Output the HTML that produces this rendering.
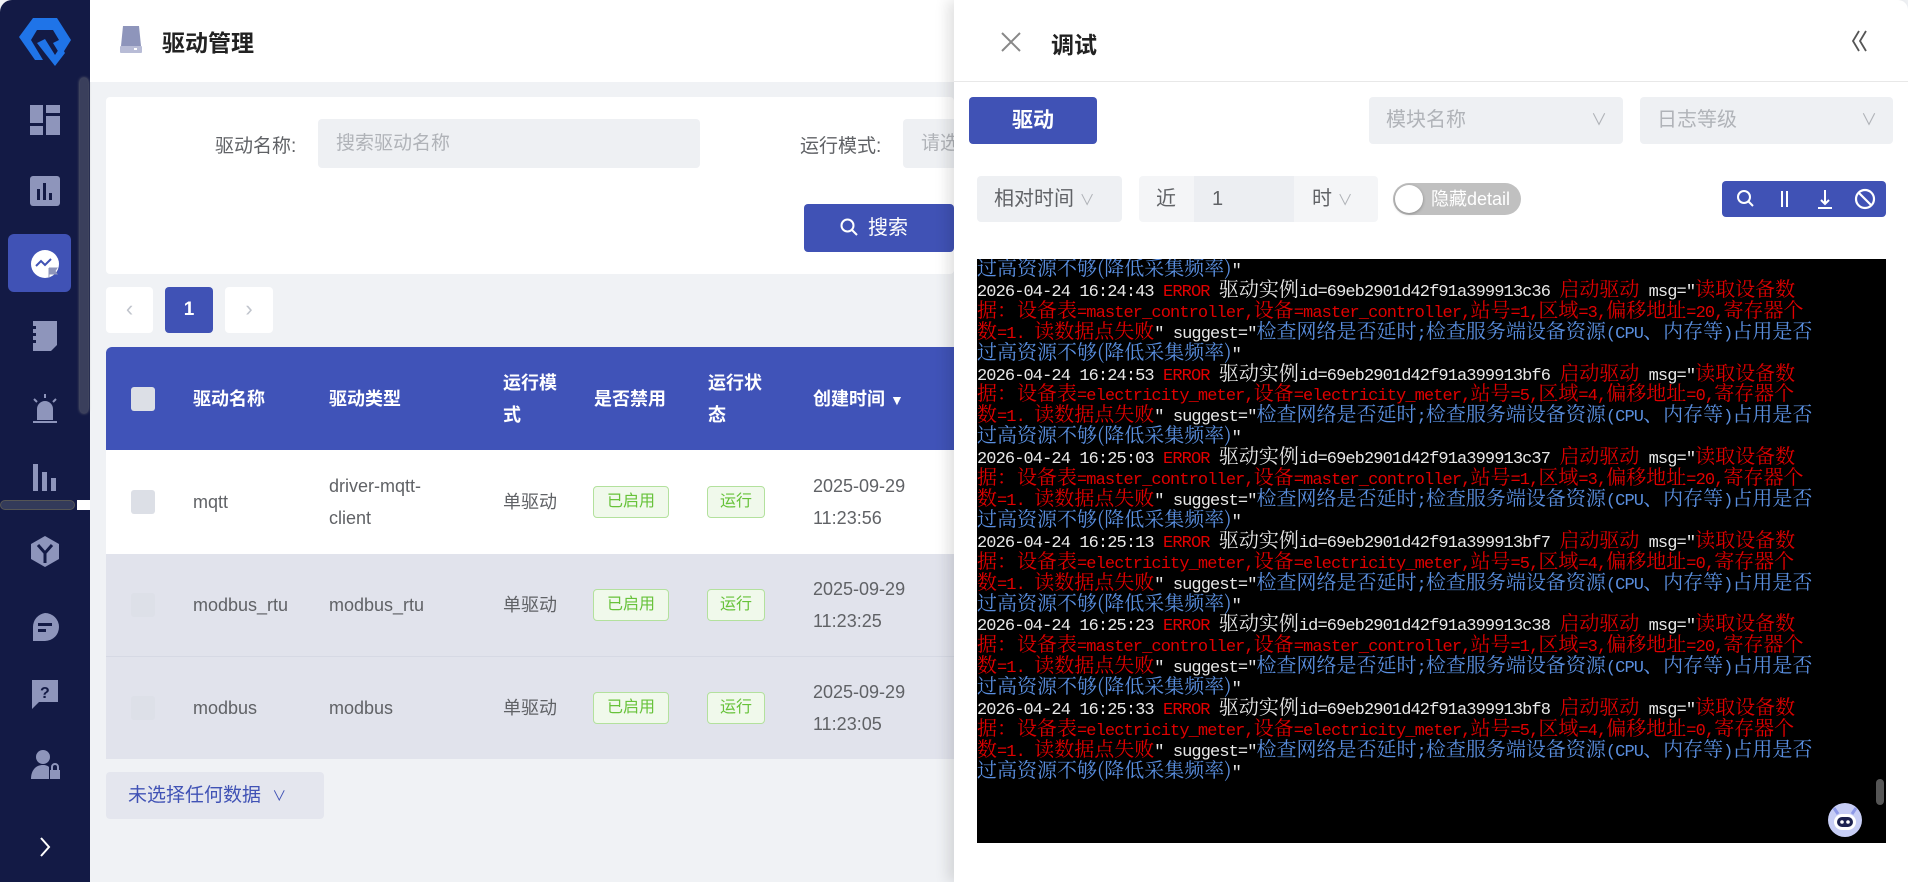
<!DOCTYPE html>
<html><head><meta charset="utf-8"><style>
*{box-sizing:border-box;margin:0;padding:0}
body{width:1908px;height:882px;overflow:hidden;background:#f0f2f5;font-family:"Liberation Sans","Noto Sans CJK SC",sans-serif;position:relative}
.a{position:absolute}
.side{left:0;top:0;width:90px;height:882px;background:#131a45;border-top-left-radius:12px}
.ic{position:absolute;left:29px;width:32px;height:32px}
.main-h{left:90px;top:0;width:864px;height:82px;background:#fff}
.th{color:#fff;font-size:18px;font-weight:bold;line-height:32px}
.td{color:#606266;font-size:18px;line-height:32px}
.tag{position:absolute;border:1px solid #b3e19d;background:#f0f9eb;color:#67c23a;font-size:16px;border-radius:4px;height:32px;line-height:30px;text-align:center}
.cb{position:absolute;left:131px;width:24px;height:24px;background:#dcdfe6;border-radius:3px}
.log{left:977px;top:259px;width:909px;height:584px;background:#000;overflow:hidden;font-family:"Liberation Mono","Noto Serif CJK SC",monospace;font-size:17px;letter-spacing:-0.9px;line-height:20.9px;color:#e8e8e8;white-space:pre;padding-top:3px}
.log i{font-style:normal;font-size:20px;letter-spacing:0;line-height:0;vertical-align:baseline;font-family:"Noto Serif CJK SC","Noto Sans CJK SC",serif}
.r{color:#e00000}.b{color:#5a8fe0}
.sel{position:absolute;background:#eef0f3;border-radius:4px;color:#b0b3b8;font-size:20px}
</style></head><body>
<div class="a side">
  <svg class="a" style="left:15px;top:15px" width="60" height="52" viewBox="0 0 60 52"><path d="M18 3h24l14 22-10 16-8-13 6-3-6-10H22l-6 10 12 20h-8L4 22z" fill="#1f74e8"/><path d="M22 28l8-4 10 16 6-9 4 7-10 13z" fill="#1f74e8"/></svg>
  <div class="a" style="left:80px;top:78px;width:8px;height:335px;border-radius:4px;background:#3a3f5c;box-shadow:0 0 3px #888"></div>
  <div class="a" style="left:0;top:500px;width:75px;height:10px;border-radius:5px;background:#333a5a;border:1px solid #555"></div>
  <div class="a" style="left:77px;top:500px;width:13px;height:10px;background:#fff"></div>
  <svg class="ic" style="top:104px" viewBox="0 0 32 32" fill="#8e95bb"><rect x="1" y="1" width="13" height="18"/><rect x="17" y="1" width="14" height="8"/><rect x="17" y="12" width="14" height="19"/><rect x="1" y="22" width="13" height="9"/></svg>
  <svg class="ic" style="top:175px" viewBox="0 0 32 32"><rect x="1" y="1" width="30" height="30" rx="3" fill="#8e95bb"/><rect x="8" y="14" width="3" height="11" fill="#131a45"/><rect x="14" y="8" width="3" height="17" fill="#131a45"/><rect x="20" y="18" width="3" height="7" fill="#131a45"/></svg>
  <div class="a" style="left:8px;top:234px;width:63px;height:58px;border-radius:6px;background:#4052b5"></div>
  <svg class="ic" style="top:248px" viewBox="0 0 32 32"><circle cx="16" cy="16" r="14" fill="#fff"/><path d="M7 18l5-5 4 4 6-6" stroke="#4052b5" stroke-width="2" fill="none"/><path d="M20 20v10M20 20h8l-2 3 2 3h-8" fill="#8e95bb" stroke="#8e95bb"/></svg>
  <svg class="ic" style="top:320px" viewBox="0 0 32 32" fill="#8e95bb"><path d="M4 1h24v24l-6 6H4z"/><rect x="1" y="6" width="6" height="3" fill="#131a45"/><rect x="1" y="13" width="6" height="3" fill="#131a45"/><rect x="1" y="20" width="6" height="3" fill="#131a45"/></svg>
  <svg class="ic" style="top:392px" viewBox="0 0 32 32" fill="#8e95bb"><path d="M8 28V17a8 8 0 0116 0v11z"/><rect x="4" y="29" width="24" height="2"/><path d="M16 2v4M5 7l3 3M27 7l-3 3" stroke="#8e95bb" stroke-width="2"/></svg>
  <svg class="ic" style="top:460px" viewBox="0 0 32 32" fill="#8e95bb"><rect x="4" y="4" width="5" height="27"/><rect x="13" y="12" width="5" height="19"/><rect x="22" y="18" width="5" height="13"/></svg>
  <svg class="ic" style="top:535px" viewBox="0 0 32 32"><path d="M16 1l14 8v15l-14 8-14-8V9z" fill="#8e95bb"/><path d="M9 10l7 8 7-8M16 18v10" stroke="#131a45" stroke-width="3" fill="none"/></svg>
  <svg class="ic" style="top:611px" viewBox="0 0 32 32"><path d="M16 2a14 14 0 110 28H4V16A14 14 0 0116 2z" fill="#8e95bb"/><rect x="9" y="12" width="14" height="3" fill="#131a45"/><rect x="9" y="18" width="8" height="3" fill="#131a45"/></svg>
  <svg class="ic" style="top:678px" viewBox="0 0 32 32"><path d="M3 2h26v22H10l-7 7z" fill="#8e95bb"/><text x="11" y="20" font-size="16" font-weight="bold" fill="#131a45" font-family="Liberation Sans">?</text></svg>
  <svg class="ic" style="top:748px" viewBox="0 0 32 32" fill="#8e95bb"><circle cx="14" cy="9" r="7"/><path d="M2 31c0-9 5-14 12-14 3 0 5 1 6 2v12z"/><rect x="21" y="22" width="10" height="9"/><path d="M23 22v-3a3 3 0 016 0v3" stroke="#8e95bb" stroke-width="2" fill="none"/></svg>
  <svg class="a" style="left:38px;top:836px" width="14" height="22" viewBox="0 0 14 22"><path d="M3 2l8 9-8 9" stroke="#fff" stroke-width="2" fill="none"/></svg>
</div>
<div class="a main-h"></div>
<svg class="a" style="left:119px;top:26px" width="24" height="28" viewBox="0 0 24 28"><path d="M4 0h16l2 20H2z" fill="#8e95bb"/><rect x="1" y="20" width="22" height="7" rx="1" fill="#b8bcd6"/><rect x="15" y="22" width="3" height="2" fill="#fff"/></svg>
<div class="a" style="left:162px;top:24px;font-size:23px;font-weight:bold;color:#222">驱动管理</div>
<div class="a" style="left:106px;top:97px;width:848px;height:177px;background:#fff;border-radius:4px"></div>
<div class="a" style="left:215px;top:131px;font-size:19px;color:#606266">驱动名称:</div>
<div class="a" style="left:318px;top:119px;width:382px;height:49px;background:#eef0f3;border-radius:4px;color:#b0b3b8;font-size:19px;line-height:49px;padding-left:18px">搜索驱动名称</div>
<div class="a" style="left:800px;top:131px;font-size:19px;color:#606266">运行模式:</div>
<div class="a" style="left:903px;top:119px;width:51px;height:49px;background:#eef0f3;border-radius:4px 0 0 4px;color:#b0b3b8;font-size:19px;line-height:49px;padding-left:18px;overflow:hidden;white-space:nowrap">请选</div>
<div class="a" style="left:804px;top:204px;width:150px;height:48px;background:#4052b5;border-radius:4px;color:#fff;font-size:20px;line-height:48px;padding-left:36px"><svg width="18" height="18" viewBox="0 0 18 18" style="vertical-align:-2px;margin-right:10px"><circle cx="7.5" cy="7.5" r="6" stroke="#fff" stroke-width="2" fill="none"/><path d="M12 12l5 5" stroke="#fff" stroke-width="2"/></svg>搜索</div>
<div class="a" style="left:106px;top:287px;width:47px;height:46px;background:#fff;border-radius:4px;color:#c0c4cc;text-align:center;line-height:44px;font-size:22px">‹</div>
<div class="a" style="left:165px;top:287px;width:48px;height:46px;background:#4052b5;border-radius:4px;color:#fff;text-align:center;line-height:46px;font-size:19px;font-weight:bold">1</div>
<div class="a" style="left:225px;top:287px;width:48px;height:46px;background:#fff;border-radius:4px;color:#c0c4cc;text-align:center;line-height:44px;font-size:22px">›</div>
<div class="a" style="left:106px;top:347px;width:848px;height:103px;background:#4053b8;border-radius:6px 0 0 0"></div>
<div class="cb" style="top:387px"></div>
<div class="a th" style="left:193px;top:383px">驱动名称</div>
<div class="a th" style="left:329px;top:383px">驱动类型</div>
<div class="a th" style="left:503px;top:367px">运行模<br>式</div>
<div class="a th" style="left:594px;top:383px">是否禁用</div>
<div class="a th" style="left:708px;top:367px">运行状<br>态</div>
<div class="a th" style="left:813px;top:383px">创建时间 <span style="font-size:14px">▼</span></div>
<div class="a" style="left:106px;top:450px;width:848px;height:104px;background:#fff"></div>
<div class="a" style="left:106px;top:554px;width:848px;height:103px;background:#e1e3ec;border-bottom:1px solid #d6d9e4"></div>
<div class="a" style="left:106px;top:657px;width:848px;height:102px;background:#e1e3ec"></div>
<div class="cb" style="top:490px"></div>
<div class="a td" style="left:193px;top:486px">mqtt</div>
<div class="a td" style="left:329px;top:470px">driver-mqtt-<br>client</div>
<div class="a td" style="left:503px;top:486px">单驱动</div>
<div class="tag" style="left:593px;top:486px;width:76px">已启用</div>
<div class="tag" style="left:707px;top:486px;width:58px">运行</div>
<div class="a td" style="left:813px;top:470px">2025-09-29<br>11:23:56</div>
<div class="cb" style="top:593px;background:#dde0e8"></div>
<div class="a td" style="left:193px;top:589px">modbus_rtu</div>
<div class="a td" style="left:329px;top:589px">modbus_rtu</div>
<div class="a td" style="left:503px;top:589px">单驱动</div>
<div class="tag" style="left:593px;top:589px;width:76px">已启用</div>
<div class="tag" style="left:707px;top:589px;width:58px">运行</div>
<div class="a td" style="left:813px;top:573px">2025-09-29<br>11:23:25</div>
<div class="cb" style="top:696px;background:#dde0e8"></div>
<div class="a td" style="left:193px;top:692px">modbus</div>
<div class="a td" style="left:329px;top:692px">modbus</div>
<div class="a td" style="left:503px;top:692px">单驱动</div>
<div class="tag" style="left:593px;top:692px;width:76px">已启用</div>
<div class="tag" style="left:707px;top:692px;width:58px">运行</div>
<div class="a td" style="left:813px;top:676px">2025-09-29<br>11:23:05</div>
<div class="a" style="left:106px;top:772px;width:218px;height:47px;background:#e4e6ee;border-radius:4px;color:#4052b5;font-size:19px;line-height:47px;padding-left:22px">未选择任何数据 <span style="font-size:14px;color:#4052b5;margin-left:6px">∨</span></div>
<div class="a" style="left:954px;top:0;width:954px;height:882px;background:#fff;box-shadow:-6px 0 14px rgba(0,0,0,0.12);border-top-right-radius:10px"></div>
<div class="a" style="left:954px;top:81px;width:954px;height:1px;background:#e8e8e8"></div>
<svg class="a" style="left:1001px;top:32px" width="20" height="20" viewBox="0 0 20 20"><path d="M1 1l18 18M19 1L1 19" stroke="#888" stroke-width="2"/></svg>
<div class="a" style="left:1051px;top:26px;font-size:23px;font-weight:bold;color:#222">调试</div>
<svg class="a" style="left:1850px;top:30px" width="18" height="22" viewBox="0 0 18 22"><path d="M9 1L3 11l6 10M16 1l-6 10 6 10" stroke="#555" stroke-width="1.8" fill="none"/></svg>
<div class="a" style="left:969px;top:97px;width:128px;height:47px;background:#4052b5;border-radius:4px;color:#fff;font-size:21px;line-height:47px;text-align:center;font-weight:bold">驱动</div>
<div class="sel" style="left:1369px;top:97px;width:254px;height:47px;line-height:47px;padding-left:17px">模块名称<span class="a" style="right:16px;top:0;font-size:16px">∨</span></div>
<div class="sel" style="left:1640px;top:97px;width:253px;height:47px;line-height:47px;padding-left:17px">日志等级<span class="a" style="right:16px;top:0;font-size:16px">∨</span></div>
<div class="sel" style="left:977px;top:176px;width:145px;height:46px;line-height:46px;padding-left:17px;color:#606266">相对时间 <span style="font-size:15px;color:#b0b3b8">∨</span></div>
<div class="sel" style="left:1139px;top:176px;width:239px;height:46px;line-height:46px;background:#f4f5f7;color:#606266;padding-left:17px">近</div>
<div class="a" style="left:1194px;top:176px;width:100px;height:46px;background:#eceef2;color:#606266;font-size:20px;line-height:46px;padding-left:18px">1</div>
<div class="a" style="left:1312px;top:176px;color:#606266;font-size:20px;line-height:46px">时 <span style="font-size:15px;color:#b0b3b8">∨</span></div>
<div class="a" style="left:1393px;top:183px;width:128px;height:32px;background:#c0c0c0;border-radius:16px;color:#fff;font-size:18px;line-height:32px;padding-left:38px">隐藏detail</div>
<div class="a" style="left:1395px;top:185px;width:28px;height:28px;background:#fff;border-radius:50%;box-shadow:0 1px 3px rgba(0,0,0,.3)"></div>
<div class="a" style="left:1722px;top:181px;width:164px;height:36px;background:#4052b5;border-radius:4px"></div>
<svg class="a" style="left:1722px;top:181px" width="164" height="36" viewBox="0 0 164 36"><circle cx="22" cy="16" r="6" stroke="#fff" stroke-width="2" fill="none"/><path d="M26 20l5 5" stroke="#fff" stroke-width="2"/><path d="M60 10v16M65 10v16" stroke="#fff" stroke-width="2"/><path d="M103 9v14M99 19l4 4 4-4M96 27h14" stroke="#fff" stroke-width="2" fill="none"/><circle cx="143" cy="18" r="9" stroke="#fff" stroke-width="2.2" fill="none"/><path d="M137 12l12 12" stroke="#fff" stroke-width="2.2"/></svg>
<div class="a log"><span class="b"><i>过高资源不够(降低采集频率)</i></span>"
2026-04-24 16:24:43 <span class="r">ERROR</span> <i>驱动实例</i>id=69eb2901d42f91a399913c36 <span class="r"><i>启动驱动</i></span> msg="<span class="r"><i>读取设备数</i></span>
<span class="r"><i>据：设备表</i>=master_controller,<i>设备</i>=master_controller,<i>站号</i>=1,<i>区域</i>=3,<i>偏移地址</i>=20,<i>寄存器个</i></span>
<span class="r"><i>数</i>=1. <i>读数据点失败</i></span>" suggest="<span class="b"><i>检查网络是否延时</i>;<i>检查服务端设备资源</i>(CPU<i>、内存等</i>)<i>占用是否</i></span>
<span class="b"><i>过高资源不够(降低采集频率)</i></span>"
2026-04-24 16:24:53 <span class="r">ERROR</span> <i>驱动实例</i>id=69eb2901d42f91a399913bf6 <span class="r"><i>启动驱动</i></span> msg="<span class="r"><i>读取设备数</i></span>
<span class="r"><i>据：设备表</i>=electricity_meter,<i>设备</i>=electricity_meter,<i>站号</i>=5,<i>区域</i>=4,<i>偏移地址</i>=0,<i>寄存器个</i></span>
<span class="r"><i>数</i>=1. <i>读数据点失败</i></span>" suggest="<span class="b"><i>检查网络是否延时</i>;<i>检查服务端设备资源</i>(CPU<i>、内存等</i>)<i>占用是否</i></span>
<span class="b"><i>过高资源不够(降低采集频率)</i></span>"
2026-04-24 16:25:03 <span class="r">ERROR</span> <i>驱动实例</i>id=69eb2901d42f91a399913c37 <span class="r"><i>启动驱动</i></span> msg="<span class="r"><i>读取设备数</i></span>
<span class="r"><i>据：设备表</i>=master_controller,<i>设备</i>=master_controller,<i>站号</i>=1,<i>区域</i>=3,<i>偏移地址</i>=20,<i>寄存器个</i></span>
<span class="r"><i>数</i>=1. <i>读数据点失败</i></span>" suggest="<span class="b"><i>检查网络是否延时</i>;<i>检查服务端设备资源</i>(CPU<i>、内存等</i>)<i>占用是否</i></span>
<span class="b"><i>过高资源不够(降低采集频率)</i></span>"
2026-04-24 16:25:13 <span class="r">ERROR</span> <i>驱动实例</i>id=69eb2901d42f91a399913bf7 <span class="r"><i>启动驱动</i></span> msg="<span class="r"><i>读取设备数</i></span>
<span class="r"><i>据：设备表</i>=electricity_meter,<i>设备</i>=electricity_meter,<i>站号</i>=5,<i>区域</i>=4,<i>偏移地址</i>=0,<i>寄存器个</i></span>
<span class="r"><i>数</i>=1. <i>读数据点失败</i></span>" suggest="<span class="b"><i>检查网络是否延时</i>;<i>检查服务端设备资源</i>(CPU<i>、内存等</i>)<i>占用是否</i></span>
<span class="b"><i>过高资源不够(降低采集频率)</i></span>"
2026-04-24 16:25:23 <span class="r">ERROR</span> <i>驱动实例</i>id=69eb2901d42f91a399913c38 <span class="r"><i>启动驱动</i></span> msg="<span class="r"><i>读取设备数</i></span>
<span class="r"><i>据：设备表</i>=master_controller,<i>设备</i>=master_controller,<i>站号</i>=1,<i>区域</i>=3,<i>偏移地址</i>=20,<i>寄存器个</i></span>
<span class="r"><i>数</i>=1. <i>读数据点失败</i></span>" suggest="<span class="b"><i>检查网络是否延时</i>;<i>检查服务端设备资源</i>(CPU<i>、内存等</i>)<i>占用是否</i></span>
<span class="b"><i>过高资源不够(降低采集频率)</i></span>"
2026-04-24 16:25:33 <span class="r">ERROR</span> <i>驱动实例</i>id=69eb2901d42f91a399913bf8 <span class="r"><i>启动驱动</i></span> msg="<span class="r"><i>读取设备数</i></span>
<span class="r"><i>据：设备表</i>=electricity_meter,<i>设备</i>=electricity_meter,<i>站号</i>=5,<i>区域</i>=4,<i>偏移地址</i>=0,<i>寄存器个</i></span>
<span class="r"><i>数</i>=1. <i>读数据点失败</i></span>" suggest="<span class="b"><i>检查网络是否延时</i>;<i>检查服务端设备资源</i>(CPU<i>、内存等</i>)<i>占用是否</i></span>
<span class="b"><i>过高资源不够(降低采集频率)</i></span>"</div>
<div class="a" style="left:1876px;top:779px;width:8px;height:26px;border-radius:4px;background:#555"></div>
<svg class="a" style="left:1826px;top:800px" width="38" height="38" viewBox="0 0 38 38"><circle cx="19" cy="20" r="17" fill="#c7cdf5"/><path d="M8 8l4 6M30 8l-4 6" stroke="#8f9ae8" stroke-width="3"/><rect x="8" y="14" width="22" height="16" rx="8" fill="#fff"/><rect x="11" y="17" width="16" height="10" rx="5" fill="#1d2250"/><circle cx="16" cy="22" r="1.8" fill="#fff"/><circle cx="22" cy="22" r="1.8" fill="#fff"/></svg>
</body></html>
